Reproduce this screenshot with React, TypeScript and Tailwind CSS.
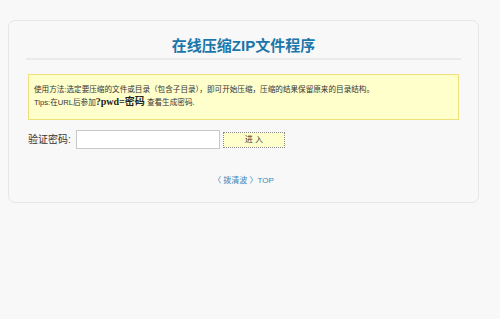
export default function App() {
  return (
    <div className="min-h-[319px] w-[500px] bg-[#f8f8f8] pt-5 pl-2 font-['Liberation_Sans','Noto_Sans_CJK_SC',sans-serif]">
      <div className="h-[183px] w-[471px] rounded-[7px] border border-[#e6e6e6] bg-[#f8f8f8] px-[17px]">
        <h1 className="mt-[15px] text-center text-[15px] leading-[20px] font-bold text-[#1b76aa]">
          在线压缩ZIP文件程序
        </h1>
        <div className="mt-[2px] h-[2px] bg-[#eaeaea]" />
        <div className="mx-[2px] mt-[14px] h-[46px] border border-[#efe07c] bg-[#ffffcc] px-[5px] pt-[9px] text-[7.6px] leading-[12px] text-[#333]">
          <div>
            使用方法:选定要压缩的文件或目录（包含子目录），即可开始压缩，压缩的结果保留原来的目录结构。
          </div>
          <div>
            Tips:在URL后参加
            <b className="font-['Liberation_Serif','Noto_Sans_CJK_SC',serif] text-[10px] text-[#222]">
              ?pwd=密码
            </b>{" "}
            查看生成密码.
          </div>
        </div>
        <div className="mt-[10px] ml-[2px] flex items-center">
          <span className="text-[10px] text-[#333]">验证密码:</span>
          <input
            type="password"
            className="ml-[5px] h-[19px] w-[144px] border border-[#c8c8c8] bg-white outline-none"
          />
          <button className="ml-[3px] h-[16px] w-[62px] border border-dotted border-[#888] bg-[#ffffcc] text-[8px] leading-[14px] text-[#333]">
            进 入
          </button>
        </div>
        <div className="mt-[26px] text-center text-[8px] text-[#3a86b8]">
          〈 拨清波 〉TOP
        </div>
      </div>
    </div>
  );
}
